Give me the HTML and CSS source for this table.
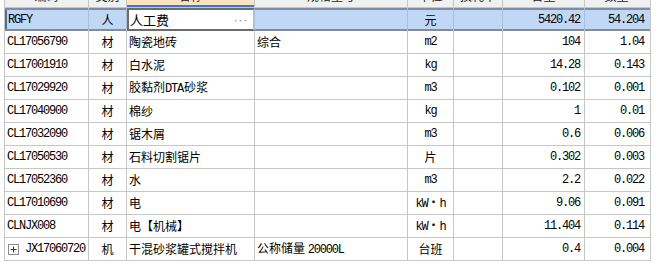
FILE: index.html
```html
<!DOCTYPE html>
<html lang="zh">
<head>
<meta charset="utf-8">
<link rel="stylesheet" href="styles.css">
</head>
<body>
<div class="grid">
  <div class="row head">
    <div class="c">编码</div><div class="c">类别</div><div class="c active">名称</div><div class="c">规格型号</div><div class="c">单位</div><div class="c">损耗率</div><div class="c">含量</div><div class="c">数量</div>
  </div>
  <div class="row sel">
    <div class="c code lat">RGFY</div><div class="c mid">人</div><div class="c edit"><span>人工费</span><span class="dots">···</span></div><div class="c"></div><div class="c mid">元</div><div class="c"></div><div class="c num lat">5420.42</div><div class="c num lat">54.204</div>
  </div>
  <div class="row">
    <div class="c code lat">CL17056790</div><div class="c mid">材</div><div class="c txt">陶瓷地砖</div><div class="c txt">综合</div><div class="c mid lat">m2</div><div class="c"></div><div class="c num lat">104</div><div class="c num lat">1.04</div>
  </div>
  <div class="row">
    <div class="c code lat">CL17001910</div><div class="c mid">材</div><div class="c txt">白水泥</div><div class="c txt"></div><div class="c mid lat">kg</div><div class="c"></div><div class="c num lat">14.28</div><div class="c num lat">0.143</div>
  </div>
  <div class="row">
    <div class="c code lat">CL17029920</div><div class="c mid">材</div><div class="c txt"><span>胶黏剂<span class="lat inl">DTA</span>砂浆</span></div><div class="c txt"></div><div class="c mid lat">m3</div><div class="c"></div><div class="c num lat">0.102</div><div class="c num lat">0.001</div>
  </div>
  <div class="row">
    <div class="c code lat">CL17040900</div><div class="c mid">材</div><div class="c txt">棉纱</div><div class="c txt"></div><div class="c mid lat">kg</div><div class="c"></div><div class="c num lat">1</div><div class="c num lat">0.01</div>
  </div>
  <div class="row">
    <div class="c code lat">CL17032090</div><div class="c mid">材</div><div class="c txt">锯木屑</div><div class="c txt"></div><div class="c mid lat">m3</div><div class="c"></div><div class="c num lat">0.6</div><div class="c num lat">0.006</div>
  </div>
  <div class="row">
    <div class="c code lat">CL17050530</div><div class="c mid">材</div><div class="c txt">石料切割锯片</div><div class="c txt"></div><div class="c mid">片</div><div class="c"></div><div class="c num lat">0.302</div><div class="c num lat">0.003</div>
  </div>
  <div class="row">
    <div class="c code lat">CL17052360</div><div class="c mid">材</div><div class="c txt">水</div><div class="c txt"></div><div class="c mid lat">m3</div><div class="c"></div><div class="c num lat">2.2</div><div class="c num lat">0.022</div>
  </div>
  <div class="row">
    <div class="c code lat">CL17010690</div><div class="c mid">材</div><div class="c txt">电</div><div class="c txt"></div><div class="c mid"><span><span class="lat">kW</span>・<span class="lat">h</span></span></div><div class="c"></div><div class="c num lat">9.06</div><div class="c num lat">0.091</div>
  </div>
  <div class="row">
    <div class="c code lat">CLNJX008</div><div class="c mid">材</div><div class="c txt">电【机械】</div><div class="c txt"></div><div class="c mid"><span><span class="lat">kW</span>・<span class="lat">h</span></span></div><div class="c"></div><div class="c num lat">11.404</div><div class="c num lat">0.114</div>
  </div>
  <div class="row">
    <div class="c code tree"><svg class="exp" width="11" height="11" viewBox="0 0 11 11"><rect x="0.5" y="0.5" width="10" height="10" fill="#fff" stroke="#8c8c8c"/><path d="M2.5 5.5h6M5.5 2.5v6" stroke="#333" stroke-width="1"/></svg><span class="lat">JX17060720</span></div><div class="c mid">机</div><div class="c txt">干混砂浆罐式搅拌机</div><div class="c txt"><span>公称储量&nbsp;<span class="lat">20000L</span></span></div><div class="c mid">台班</div><div class="c"></div><div class="c num lat">0.4</div><div class="c num lat">0.004</div>
  </div>
</div>
</body>
</html>
```
FILE: styles.css
```css
html, body {
  margin: 0;
  padding: 0;
  background: #fff;
}
body {
  font-family: "Noto Sans CJK SC", sans-serif;
  font-size: 12px;
  color: #000;
}
.grid {
  margin-top: -15px;
  margin-left: 4px;
  width: 645px;
  border-left: 1px solid #c6c6c6;
  border-right: 1px solid #c6c6c6;
}
.row {
  display: grid;
  grid-template-columns: 84px 38px 128px 153px 46px 49px 82px 63px;
  height: 23px;
  box-sizing: border-box;
  border-bottom: 1px solid #c6c6c6;
}
.c {
  box-sizing: border-box;
  border-right: 1px solid #c6c6c6;
  display: flex;
  align-items: center;
  white-space: nowrap;
  overflow: hidden;
  line-height: 22px;
}
.c:last-child {
  border-right: none;
}
.head {
  background: #f0f0f0;
}
.head .c {
  justify-content: center;
  color: #222;
}
.head .active {
  background: #fbe3c1;
  box-shadow: inset 0 -2px 0 #3a78d8;
}
.code {
  padding-left: 2px;
}
.txt {
  padding-left: 2px;
}
.mid {
  justify-content: center;
}
.num {
  justify-content: flex-end;
  padding-right: 4px;
}
.lat {
  font-family: "Liberation Mono", monospace;
  letter-spacing: -1.2px;
}
.inl {
  padding-right: 1px;
}
.sel {
  background: #c0d8f5;
  box-shadow: inset 0 2px 0 #808da0, inset 0 -2px 0 #808da0, inset 2px 0 0 #4f6b9a;
  border-bottom: 0;
  height: 23px;
}
.sel .c {
  border-right-color: #aebfd6;
}
.sel .code {
  padding-left: 3px;
}
.edit {
  background: #fff;
  border: 2px solid #6c6c6c;
  justify-content: space-between;
  padding: 0 5px 0 1px;
  font-size: 13px;
}
.dots {
  font-family: "Liberation Sans", sans-serif;
  color: #8a8a8a;
  font-size: 13px;
  letter-spacing: 0.5px;
}
.tree {
  padding-left: 3px;
  gap: 6px;
}
.exp {
  display: block;
  flex: none;
}
```
